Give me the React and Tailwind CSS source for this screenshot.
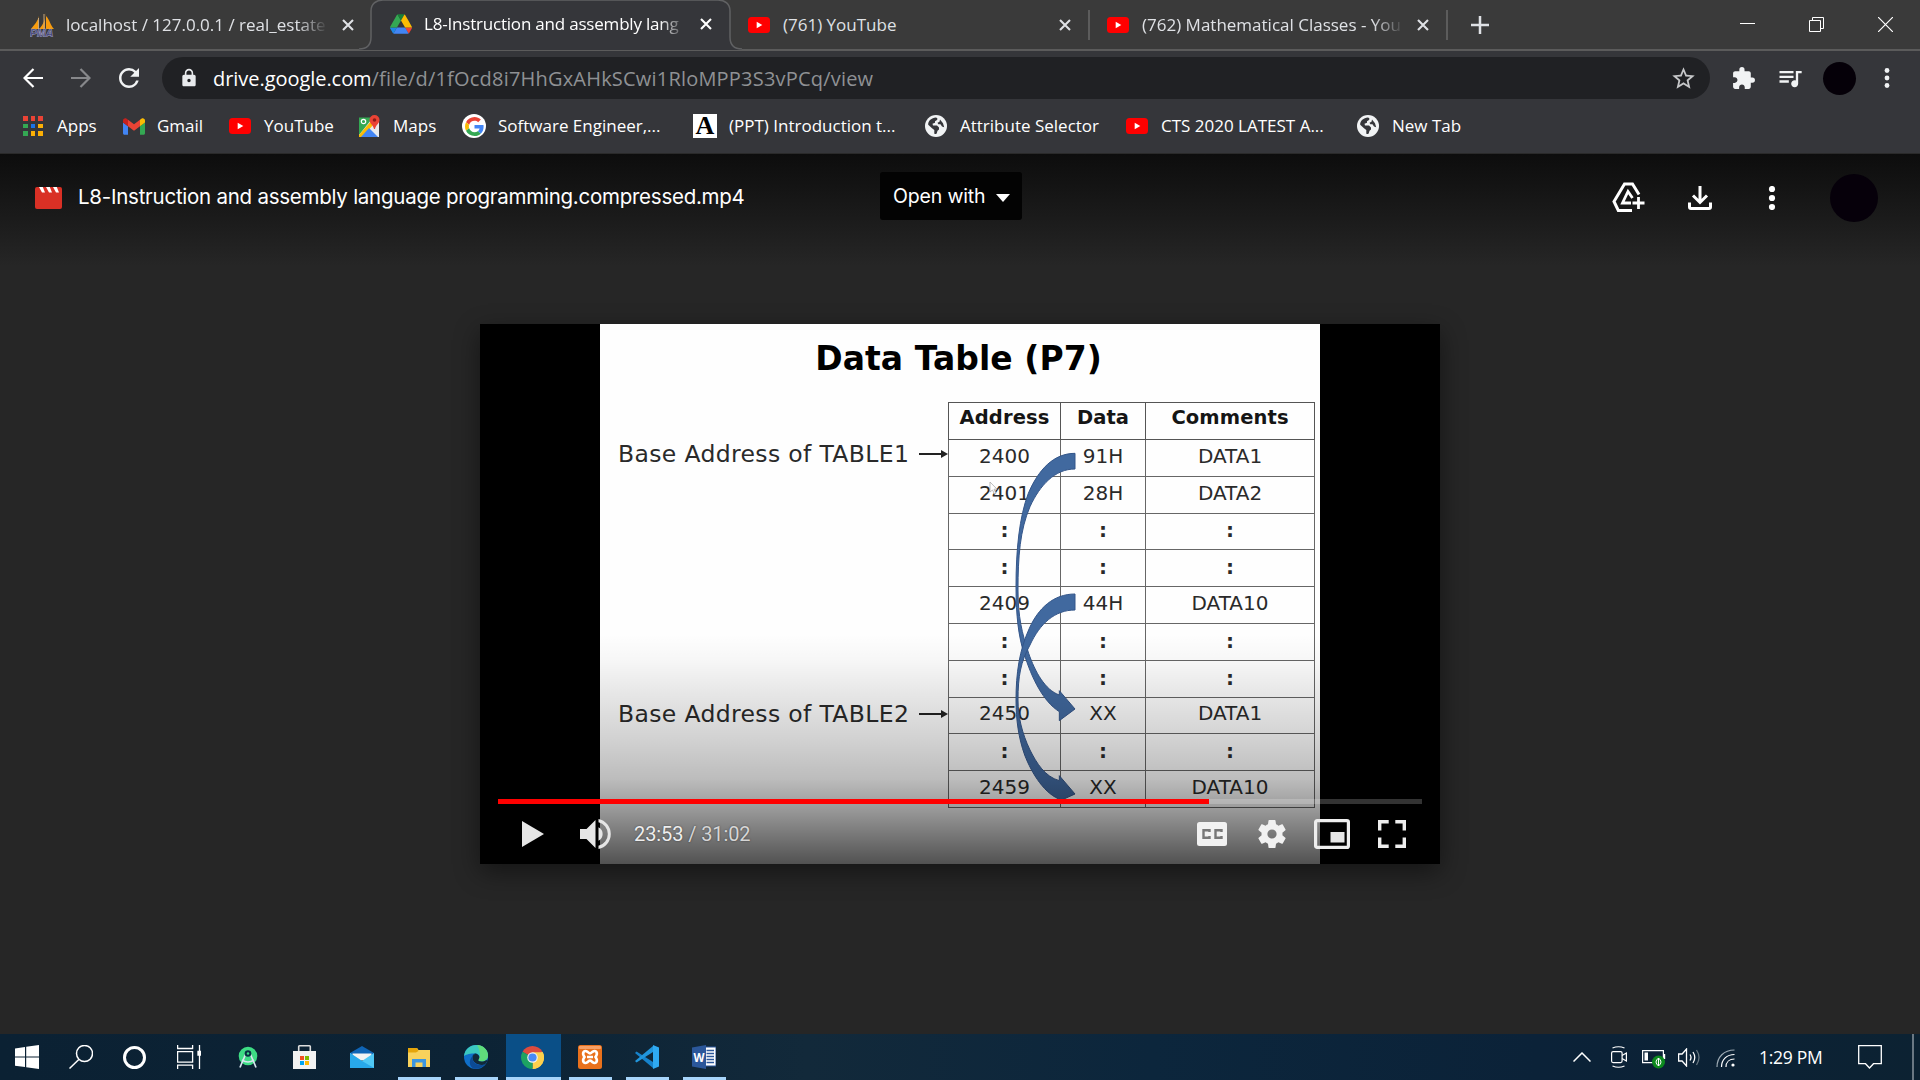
import React from "react";
import { MdStarBorder, MdExtension, MdQueueMusic, MdLock, MdRefresh } from "react-icons/md";

const ui = "font-['Open_Sans','Noto_Sans',sans-serif]";

function YouTube() {
  return (
    <svg viewBox="0 0 22 16" className="h-4 w-[22px] shrink-0">
      <rect width="22" height="16" rx="3.5" fill="#f00" />
      <path d="M8.7 4.8 14.3 8l-5.6 3.2z" fill="#fff" />
    </svg>
  );
}

function DriveLogo() {
  return (
    <svg viewBox="0 0 87.3 78" className="h-5 w-[22px] shrink-0">
      <path d="m6.6 66.85 3.85 6.65c.8 1.4 1.95 2.5 3.3 3.3l13.75-23.8h-27.5c0 1.55.4 3.1 1.2 4.5z" fill="#1e88e5" />
      <path d="m43.65 25-13.75-23.8c-1.35.8-2.5 1.9-3.3 3.3l-25.4 44a9.06 9.06 0 0 0 -1.2 4.5h27.5z" fill="#34a853" />
      <path d="m73.55 76.8c1.35-.8 2.5-1.9 3.3-3.3l1.6-2.75 7.65-13.25c.8-1.4 1.2-2.95 1.2-4.5h-27.5l5.85 11.5z" fill="#ea4335" />
      <path d="m43.65 25 13.75-23.8c-1.35-.8-2.9-1.2-4.5-1.2h-18.5c-1.6 0-3.15.45-4.5 1.2z" fill="#188038" />
      <path d="m59.8 53h-32.3l-13.75 23.8c1.35.8 2.9 1.2 4.5 1.2h50.8c1.6 0 3.15-.45 4.5-1.2z" fill="#4285f4" />
      <path d="m73.4 26.5-12.7-22c-.8-1.4-1.95-2.5-3.3-3.3l-13.75 23.8 16.15 28h27.45c0-1.55-.4-3.1-1.2-4.5z" fill="#fbbc04" />
    </svg>
  );
}

function PmaLogo() {
  return (
    <svg viewBox="0 0 24 24" className="h-6 w-6 shrink-0">
      <path d="M9 3C8 8 4 12 1 16h7zM15 0c1 6-2 12-6 16h6zM16 3c4 4 4 9 8 13h-8z" fill="#f89c0e" />
      <path d="M14 1v15M8.500 5v11" stroke="#c9a77a" strokeWidth="1" />
      <text x="0" y="23.500" fontSize="10" fontWeight="700" fontStyle="italic" fill="#33356e" stroke="#a9a9c9" strokeWidth=".5" textLength="23.500" lengthAdjust="spacingAndGlyphs" className="font-['Liberation_Sans',sans-serif]">PMA</text>
    </svg>
  );
}

function Globe() {
  return (
    <svg viewBox="0 0 22 22" className="size-[22px] shrink-0">
      <circle cx="11" cy="11" r="11" fill="#f1f3f4" />
      <path d="M11 2.5c1.5.5 1.8 1.3 1 2.4L10 6.2v1.6L7.5 8.8 8 10.5h4l2 2v2l-1.5 1.3-.8 2.7c-1 .8-2 .7-2.4 0V15L7 13.3 3.2 9.7C3 6 6.500 2.800 11 2.500zM15 4.500l3 3.700 1.200 4-2.200-.7-1.500-2.200h-2.200l-.8-1.500 2-1z" fill="#35363a" />
    </svg>
  );
}

function GoogleG() {
  return (
    <span className="flex size-6 shrink-0 items-center justify-center rounded-full bg-white">
      <svg viewBox="0 0 48 48" className="size-[19px]">
        <path fill="#EA4335" d="M24 9.5c3.54 0 6.71 1.22 9.21 3.6l6.85-6.85C35.9 2.38 30.47 0 24 0 14.62 0 6.51 5.38 2.56 13.22l7.98 6.19C12.43 13.72 17.74 9.5 24 9.5z" />
        <path fill="#4285F4" d="M46.98 24.55c0-1.57-.15-3.09-.38-4.55H24v9.02h12.94c-.58 2.96-2.26 5.48-4.78 7.18l7.73 6c4.51-4.18 7.09-10.36 7.09-17.65z" />
        <path fill="#FBBC05" d="M10.53 28.59c-.48-1.45-.76-2.99-.76-4.59s.27-3.14.76-4.59l-7.98-6.19C.92 16.46 0 20.12 0 24c0 3.88.92 7.54 2.56 10.78l7.97-6.19z" />
        <path fill="#34A853" d="M24 48c6.48 0 11.93-2.13 15.89-5.81l-7.73-6c-2.15 1.45-4.92 2.3-8.16 2.3-6.26 0-11.57-4.22-13.47-9.91l-7.98 6.19C6.51 42.62 14.62 48 24 48z" />
      </svg>
    </span>
  );
}

function Gmail() {
  return (
    <svg viewBox="52 42 88 66" className="h-[17px] w-[22px] shrink-0">
      <path fill="#4285f4" d="M58 108h14V74L52 59v43c0 3.320 2.690 6 6 6" />
      <path fill="#34a853" d="M120 108h14c3.320 0 6-2.690 6-6V59l-20 15" />
      <path fill="#fbbc04" d="M120 48v26l20-15v-8c0-7.420-8.470-11.650-14.400-7.200" />
      <path fill="#ea4335" d="M72 74V48l24 18 24-18v26L96 92" />
      <path fill="#c5221f" d="M52 51v8l20 15V48l-5.600-4.200c-5.940-4.450-14.400-.220-14.400 7.200" />
    </svg>
  );
}

function Maps() {
  return (
    <svg viewBox="0 0 22 22" className="size-[22px] shrink-0">
      <path d="M1 3h20v19H1z" fill="#e8eaed" />
      <path d="M1 2.500h14L1 20z" fill="#34a853" />
      <path d="M1 20 14 5l3 3L4 22H1z" fill="#fbbc04" />
      <path d="M11 13l9 9H3z" fill="#4285f4" />
      <circle cx="5.500" cy="6.500" r="2.200" fill="none" stroke="#fff" strokeWidth="1.200" />
      <path d="M16.500 0a5 5 0 0 1 5 5c0 3.500-3.500 4.500-4.500 9h-1c-1-4.500-4.500-5.500-4.500-9a5 5 0 0 1 5-5z" fill="#ea4335" />
      <circle cx="16.500" cy="5" r="1.800" fill="#8c1d18" />
    </svg>
  );
}

function AppsGrid() {
  return (
    <span className="grid size-5 shrink-0 grid-cols-3 gap-[3px]">
      {["bg-[#ea4335]", "bg-[#ea4335]", "bg-[#ea4335]", "bg-[#34a853]", "bg-[#1a73e8]", "bg-[#fbaf05]", "bg-[#34a853]", "bg-[#fbaf05]", "bg-[#fbaf05]"].map((c, i) => (
        <span key={i} className={c} />
      ))}
    </span>
  );
}

function Cross({ className }) {
  return (
    <svg viewBox="0 0 12 12" className={`size-3 shrink-0 ${className}`}>
      <path d="M1 1l10 10M11 1 1 11" stroke="currentColor" strokeWidth="2.100" />
    </svg>
  );
}

function TabBar() {
  return (
    <div className="relative flex h-[51px] items-center border-b-2 border-[#5b5b5b] bg-[#3a3a3a] text-[17px] text-[#dfe1e5]">
      <div className="flex h-[50px] w-[371px] shrink-0 items-center pl-[30px]">
        <PmaLogo />
        <span className="ml-3 w-[262px] overflow-hidden whitespace-nowrap [mask-image:linear-gradient(to_right,#000_88%,transparent)]">localhost / 127.0.0.1 / real_estate</span>
        <Cross className="ml-3.5" />
      </div>
      <div className="relative h-[51px] w-[359px] shrink-0">
        <svg viewBox="0 0 384 51" className="absolute -left-3 top-0 h-[51px] w-96">
          <path d="M0 50c8 0 12-4 12-12V12C12 5 17 1 24 1h335c7 0 12 4 12 11v26c0 8 4 12 12 12v2H0z" fill="#35363a" />
          <path d="M0 50c8 0 12-4 12-12V12C12 5 17 1 24 1h335c7 0 12 4 12 11v26c0 8 4 12 12 12" fill="none" stroke="#606163" strokeWidth="1.500" />
        </svg>
        <div className="relative flex h-[50px] items-center pl-[19px] text-white">
          <DriveLogo />
          <span className="ml-3 w-[262px] overflow-hidden whitespace-nowrap tracking-[-0.2px] [mask-image:linear-gradient(to_right,#000_90%,transparent)]">L8-Instruction and assembly lang</span>
          <Cross className="ml-3.5" />
        </div>
      </div>
      <div className="flex h-[50px] w-[358px] shrink-0 items-center pl-[18px]">
        <YouTube />
        <span className="ml-[13px] w-[262px] whitespace-nowrap">(761) YouTube</span>
        <Cross className="ml-[14px]" />
      </div>
      <div className="flex h-[50px] w-[358px] shrink-0 items-center">
        <span className="h-[30px] w-[2px] bg-[#5c5c5c]" />
        <span className="w-[17px]" />
        <YouTube />
        <span className="ml-[13px] w-[262px] overflow-hidden whitespace-nowrap [mask-image:linear-gradient(to_right,#000_88%,transparent)]">(762) Mathematical Classes - You</span>
        <Cross className="ml-[13px]" />
      </div>
      <span className="h-[30px] w-[2px] bg-[#5c5c5c]" />
      <svg viewBox="0 0 18 18" className="ml-[23px] size-[18px]">
        <path d="M9 0v18M0 9h18" stroke="#dfe1e5" strokeWidth="2.500" />
      </svg>
      <div className="ml-auto flex h-[42px] items-center gap-[53px] pr-[27px] text-white">
        <svg viewBox="0 0 15 15" className="mr-px size-[15px]"><path d="M0 6.500h15" stroke="currentColor" /></svg>
        <svg viewBox="0 0 15 15" className="mr-px size-[15px]" fill="none" stroke="currentColor"><path d="M.5 3.500h11v11H.5zM3.500 3.500v-3h11v11h-3" /></svg>
        <svg viewBox="0 0 15 15" className="size-[15px]"><path d="M0 0l15 15M15 0 0 15" stroke="currentColor" strokeWidth="1.200" /></svg>
      </div>
    </div>
  );
}

function AddressBar() {
  return (
    <div className="flex h-[54px] items-center pl-[23px]">
      <svg viewBox="0 0 20 20" className="size-5" fill="none" stroke="#fff" strokeWidth="2.200"><path d="M20 10H2M10.500 1 1.500 10l9 9" /></svg>
      <svg viewBox="0 0 20 20" className="ml-7 size-5" fill="none" stroke="#87888b" strokeWidth="2.200"><path d="M0 10h18M9.500 1l9 9-9 9" /></svg>
      <MdRefresh className="ml-[23px] size-[30px] text-[#f1f3f4]" />
      <div className="ml-[18px] flex h-[42px] w-[1548px] items-center rounded-full bg-[#202124] pl-[17px] pr-[13px]">
        <MdLock className="size-5 text-[#e8eaed]" />
        <span className="ml-[14px] mt-0.5 whitespace-nowrap text-[20px] text-[#8f9194]">
          <span className="tracking-[-0.05px] text-white">drive.google.com</span>
          <span className="tracking-[0.2px]">/file/d/1fOcd8i7HhGxAHkSCwi1RloMPP3S3vPCq/view</span>
        </span>
        <MdStarBorder className="ml-auto size-[27px] text-[#c6c7c9]" />
      </div>
      <MdExtension className="ml-[21px] size-[25px] text-[#f1f3f4]" />
      <MdQueueMusic className="ml-5 size-7 text-[#f1f3f4]" />
      <span className="ml-[19px] size-[33px] rounded-full bg-[#050008]" />
      <svg viewBox="0 0 6 22" className="ml-7 h-[22px] w-1.5" fill="#f1f3f4">
        <circle cx="3" cy="3.500" r="2.400" /><circle cx="3" cy="11" r="2.400" /><circle cx="3" cy="18.500" r="2.400" />
      </svg>
    </div>
  );
}

const bookmarks = [
  { icon: <AppsGrid />, box: "w-[100px] gap-3.5", label: "Apps" },
  { icon: <Gmail />, box: "w-[106px] gap-3", label: "Gmail" },
  { icon: <YouTube />, box: "w-[129px] gap-[13px]", label: "YouTube" },
  { icon: <Maps />, box: "w-[104px] gap-[13px]", label: "Maps" },
  { icon: <GoogleG />, box: "w-[231px] gap-3", label: "Software Engineer,..." },
  {
    icon: <span className="flex size-6 shrink-0 items-center justify-center bg-white font-['Liberation_Serif',serif] text-[26px] leading-6 font-bold text-black">A</span>,
    box: "w-[232px] gap-3", label: "(PPT) Introduction t...",
  },
  { icon: <Globe />, box: "w-[201px] gap-[13px]", label: "Attribute Selector" },
  { icon: <YouTube />, box: "w-[231px] gap-[13px]", label: "CTS 2020 LATEST A..." },
  { icon: <Globe />, box: "w-[120px] gap-[13px]", label: "New Tab" },
];

function Bookmarks() {
  return (
    <div className="flex h-[48px] items-center pb-[6px] pl-[23px] text-[17px] text-white">
      {bookmarks.map((b) => (
        <div key={b.label} className={`flex h-10 shrink-0 items-center whitespace-nowrap ${b.box}`}>
          {b.icon}
          <span>{b.label}</span>
        </div>
      ))}
    </div>
  );
}

function DriveHeader() {
  return (
    <div className="flex h-[112px] items-start bg-linear-to-b from-[#0d0d0d] to-[#262626] font-['Inter',sans-serif] text-white">
      <div className="flex h-[87px] w-[880px] items-center pl-[35px]">
        <svg viewBox="0 0 27 22" className="h-[22px] w-[27px]">
          <rect width="27" height="22" rx="2" fill="#d93025" />
          <path d="M4 0h3.800l2.200 5.500H7zM11 0h3.800L17 5.500h-3zM18 0h3.800L24 5.500h-3z" fill="#fff" />
        </svg>
        <span className="ml-4 whitespace-nowrap text-[20.5px] tracking-[-0.25px]">L8-Instruction and assembly language programming.compressed.mp4</span>
      </div>
      <button className="mt-[18px] flex h-12 w-[142px] items-center rounded-[3px] bg-[#030303] pl-[13px] text-[19.500px] tracking-[-0.15px]">
        <span className="mt-0.5 w-[103px] text-left whitespace-nowrap">Open with</span>
        <svg viewBox="0 0 14 8" className="mt-1 h-2 w-3.5"><path d="M0 0h14L7 8z" fill="#fff" /></svg>
      </button>
      <div className="ml-auto flex h-[87px] items-center pr-[42px]">
        <svg viewBox="0 0 34 31" className="h-[31px] w-[34px]" fill="none" stroke="#fff" strokeWidth="3">
          <path d="M27 12.500 20.500 2H12.500L2 19.500 6.300 28.500H20" />
          <path d="M20.500 16 16 9.500 10.500 21H19" strokeWidth="2.800" />
          <path d="M26.500 15v12M20.500 21h12" strokeWidth="2.800" />
        </svg>
        <svg viewBox="0 0 24 24" className="ml-[42px] size-6" fill="none" stroke="#fff" strokeWidth="3">
          <path d="M12 0v15M5 9.500l7 7 7-7M1.500 16.500v4.500c0 1 .500 1.500 1.500 1.500h18c1 0 1.500-.5 1.500-1.500v-4.500" />
        </svg>
        <svg viewBox="0 0 8 24" className="ml-14 h-6 w-2" fill="#fff">
          <circle cx="4" cy="3" r="3.100" /><circle cx="4" cy="12" r="3.100" /><circle cx="4" cy="21" r="3.100" />
        </svg>
        <span className="ml-[54px] size-12 rounded-full bg-[#06000a]" />
      </div>
    </div>
  );
}

const rows = [
  ["2400", "91H", "DATA1"],
  ["2401", "28H", "DATA2"],
  [":", ":", ":"],
  [":", ":", ":"],
  ["2409", "44H", "DATA10"],
  [":", ":", ":"],
  [":", ":", ":"],
  ["2450", "XX", "DATA1"],
  [":", ":", ":"],
  ["2459", "XX", "DATA10"],
];

function BaseLabel({ text, className }) {
  return (
    <div className={`flex h-8 items-center ${className}`}>
      <span className="mt-0.5 w-[301px] whitespace-nowrap text-[23.500px] tracking-[0.35px]">{text}</span>
      <svg viewBox="0 0 29 8" className="h-2 w-[29px]"><path d="M0 4h24" stroke="#222" strokeWidth="2" /><path d="M22 0l7 4-7 4z" fill="#222" /></svg>
    </div>
  );
}

function Slide() {
  return (
    <div className="h-full w-[720px] overflow-hidden bg-[#fefefe] font-['DejaVu_Sans',sans-serif] text-[#2a2a2a]">
      <h1 className="mt-[17px] h-9 pr-[3px] text-center text-[33px] leading-9 font-bold tracking-[0.05px] text-black">Data Table (P7)</h1>
      <div className="mt-[25px] flex">
        <div className="w-[348px] shrink-0 pl-[18px]">
          <BaseLabel text="Base Address of TABLE1" className="mt-9" />
          <BaseLabel text="Base Address of TABLE2" className="mt-[228px]" />
        </div>
        <div className="relative">
          <table className="w-[367px] table-fixed border-collapse text-center text-[20px] leading-6">
            <colgroup><col className="w-[112px]" /><col className="w-[85px]" /><col className="w-[169px]" /></colgroup>
            <thead>
              <tr className="h-[37px] text-[19.500px] text-[#151515]">
                {["Address", "Data", "Comments"].map((h) => (
                  <th key={h} className="border-[1.500px] border-[#555] p-0 pb-1.5 tracking-[0.1px]">{h}</th>
                ))}
              </tr>
            </thead>
            <tbody>
              {rows.map((r, i) => (
                <tr key={i} className="h-[36.800px]">
                  {r.map((c, j) => (
                    <td key={j} className={c === ":" ? "border-[1.500px] border-[#666] p-0 pb-0.5 font-bold" : "border-[1.500px] border-[#666] p-0 pb-1"}>{c}</td>
                  ))}
                </tr>
              ))}
            </tbody>
          </table>
          <svg viewBox="0 0 1200 1290" className="absolute -left-[18px] -top-[12px] h-[430px] w-[400px]" fill="#41699f" stroke="#34568a" strokeWidth="3">
            <path d="M435 190C370 190 325 240 295 310C268 380 258 480 258 590C258 680 266 740 282 790C305 865 340 935 388 965V992L435 957L388 902V915C345 900 315 845 296 790C276 730 264 680 264 600C264 500 270 420 300 350C330 285 375 237 435 237Z" />
            <path d="M435 612C370 612 325 655 298 715C268 780 258 850 258 930C258 990 266 1045 284 1095C305 1150 345 1215 395 1230L435 1212L388 1157V1172C345 1160 320 1120 300 1080C276 1030 264 980 264 930C264 860 272 815 300 765C330 700 375 660 435 660Z" />
          </svg>
          <svg viewBox="0 0 10 14" className="absolute left-[41px] top-[79px] h-3.5 w-2.5" fill="#fff" stroke="#aaa" strokeWidth=".8">
            <path d="M1 1v10l2.500-2 2 4 1.500-.8-2-4H8z" />
          </svg>
        </div>
      </div>
    </div>
  );
}

function Controls() {
  return (
    <div className="absolute inset-x-0 bottom-0 h-[230px] bg-[linear-gradient(to_bottom,transparent_0%,rgba(0,0,0,.03)_12%,rgba(0,0,0,.1)_28%,rgba(0,0,0,.18)_47%,rgba(0,0,0,.26)_63%,rgba(0,0,0,.36)_73%,rgba(0,0,0,.5)_85%,rgba(0,0,0,.68)_100%)] px-[18px] pt-[165px]">
      <div className="flex h-[5px] bg-white/20"><span className="w-[711px] bg-[#f00]" /></div>
      <div className="mt-[14px] flex h-[32px] items-center pl-6 pr-4 text-[#eee]">
        <svg viewBox="0 0 22 26" className="h-[26px] w-[22px]"><path d="M0 0l22 13L0 26z" fill="#e6e6e6" /></svg>
        <svg viewBox="0 0 31 30" className="ml-9 h-[30px] w-[31px]" fill="#e6e6e6">
          <path d="M0 10h6.500L15.500 1v28L6.500 20H0zM18.500 8.300a7.500 7.500 0 0 1 0 13.400zM18.500 0a15.300 15.300 0 0 1 0 30v-3.300a12 12 0 0 0 0-23.400z" />
        </svg>
        <span className="ml-[23px] font-['Roboto',sans-serif] text-[20px] tracking-[-0.1px] whitespace-pre [text-shadow:0_0_2px_rgba(0,0,0,.5)]">23:53<span className="text-[#d6d6d6]"> / 31:02</span></span>
        <svg viewBox="0 0 30 24" className="ml-auto h-6 w-[30px]">
          <rect width="30" height="24" rx="2.500" fill="#f1f1f1" />
          <path d="M12.500 10V8.200H6.500v7.600h6V14M24.500 10V8.200h-6v7.600h6V14" fill="none" stroke="#777" strokeWidth="2.400" />
        </svg>
        <svg viewBox="2 2 20 20" className="ml-[31px] size-7" fill="#f1f1f1">
          <path d="M19.430 12.980c.04-.32.070-.64.070-.98s-.03-.66-.07-.98l2.110-1.650c.19-.15.240-.42.120-.64l-2-3.460c-.12-.22-.39-.3-.61-.22l-2.490 1c-.52-.4-1.080-.73-1.690-.98l-.38-2.650C14.460 2.180 14.250 2 14 2h-4c-.25 0-.46.180-.49.420l-.38 2.650c-.61.250-1.170.590-1.690.980l-2.490-1c-.23-.09-.49 0-.61.220l-2 3.460c-.13.220-.07.490.12.640l2.110 1.650c-.04.320-.07.650-.07.980s.03.660.070.980l-2.110 1.650c-.19.150-.24.420-.12.640l2 3.460c.12.220.390.300.610.220l2.490-1c.52.400 1.080.730 1.690.980l.380 2.650c.03.240.240.420.490.420h4c.25 0 .46-.18.490-.42l.38-2.650c.61-.25 1.170-.59 1.690-.98l2.490 1c.23.090.49 0 .610-.22l2-3.460c.12-.22.070-.49-.12-.64l-2.110-1.650zM12 15.300a3.300 3.300 0 1 1 0-6.600 3.300 3.300 0 0 1 0 6.600z" />
        </svg>
        <svg viewBox="0 0 36 30" className="ml-7 h-[30px] w-9">
          <rect x="1.600" y="1.600" width="32.800" height="26.800" rx="1.500" fill="none" stroke="#eee" strokeWidth="3.200" />
          <path d="M16.500 13h14v10.500h-14z" fill="#e6e6e6" />
        </svg>
        <svg viewBox="0 0 28 28" className="ml-7 size-7" fill="none" stroke="#eee" strokeWidth="3.400"><path d="M1.700 10.500V1.700h9M17.300 1.700h9v8.800M26.300 17.500v8.800h-9M10.700 26.300h-9v-8.800" /></svg>
      </div>
    </div>
  );
}

const task = "flex h-[46px] shrink-0 items-center justify-center border-b-[3px] pt-[3px]";

function Taskbar() {
  return (
    <div className="flex h-[46px] items-center bg-[linear-gradient(to_right,#0b2133_0%,#0c2335_25%,#12293a_42%,#0c263c_60%,#0b2238_80%,#0c2232_100%)] text-white">
      <svg viewBox="0 0 24 24" className="ml-[15px] size-6" fill="#fff"><path d="M0 3.500 10 2v9.500H0zM11.200 1.800 24 0v11.500H11.200zM0 12.500h10V22L0 20.700zM11.200 12.500H24V24l-12.800-1.800z" /></svg>
      <svg viewBox="0 0 24 24" className="ml-[30px] size-6" fill="none" stroke="#fff" strokeWidth="1.500"><circle cx="15.500" cy="8.500" r="8" /><path d="M9.800 14.500.5 23.500" /></svg>
      <span className="ml-[30px] size-[23px] rounded-full border-[3px] border-white" />
      <svg viewBox="0 0 24 24" className="ml-[31px] size-6" fill="none" stroke="#fff" strokeWidth="1.300"><path d="M.6 0v3.500h15V0M.6 6.600h15v10.500H.6zM.6 24v-3.800h15V24M22.500 0v24" /><path d="M21 6.500h3v3.500h-3z" fill="#fff" /></svg>
      <svg viewBox="0 0 20 22" className="ml-[37px] h-[22px] w-5">
        <circle cx="10" cy="10" r="9.300" fill="#3ddc84" /><path d="M9 5 3 19l-1 2.500M11 5l6 14 1 2.500M4 14q6 4 12 0" fill="none" stroke="#d7e4ee" strokeWidth="1.700" /><circle cx="10" cy="7.500" r="3.300" fill="#073042" /><circle cx="10" cy="7.500" r="1.200" fill="#3ddc84" />
      </svg>
      <svg viewBox="0 0 23 24" className="ml-[35px] h-6 w-[23px]">
        <path d="M5.700 7V1.500Q5.700.800 6.500.800h10q.8 0 .8.700V7" fill="none" stroke="#ddd" strokeWidth="1.600" /><path d="M0 6h23v18H0z" fill="#f2f2f2" />
        <path d="M7 11h4v4H7z" fill="#f25022" /><path d="M12 11h4v4h-4z" fill="#7fba00" /><path d="M7 16h4v4H7z" fill="#00a4ef" /><path d="M12 16h4v4h-4z" fill="#ffb900" />
      </svg>
      <svg viewBox="0 0 24 22" className="ml-[34px] h-[22px] w-6"><path d="M0 7 12 0l12 7v4H0z" fill="#0f64b5" /><path d="M2.500 7.500h19v7h-19z" fill="#f3f3f3" /><path d="M0 7l12 8 12-8v15H0z" fill="#50c8f5" /><path d="M0 7l12 8 12 7H0z" fill="#28a8ea" /></svg>

      <div className="ml-6 flex gap-3.5">
        <div className={`${task} w-[43px] border-[#a7d5fb]`}>
          <svg viewBox="0 0 22 19" className="mr-px h-[19px] w-[22px]"><path d="M0 0h9l1.500 2H22v17H0z" fill="#f8d25c" /><path d="M0 0h9l1.500 3L8 4.500H0z" fill="#e5a50a" /><path d="M4 19v-8h14v8h-3.500v-4.500h-7V19z" fill="#3b96e0" /></svg>
        </div>
        <div className={`${task} w-[43px] border-[#a7d5fb]`}>
          <svg viewBox="0 0 24 24" className="mr-0.5 size-6">
            <circle cx="12" cy="12" r="12" fill="#0f6fc9" />
            <path d="M0 11C1 4 6 0 12 0c7 0 12 5 12 10.500 0 4-3.500 6-6.500 6-3 0-3.500-1-3-2 1.500-1.500 1.500-5.500-3-6C6 8 1 10 0 11z" fill="#3bc8c0" />
            <path d="M13 0c7 .5 11 5 11 10.500 0 4-3.500 6-6.500 6-3 0-3.500-1-3-2 3-4 1-10-1.500-14.500z" fill="#5fdc7b" />
            <path d="M14.500 14.500c-.5 1 0 2 3 2 2.500 0 4-.7 5-1.500l1 1-2.500 3.500C15 21 8 18 8.500 12c0-2 1.500-3.500 3.200-3.500 4 1 4.300 4.500 2.800 6z" fill="#12293a" />
            <path d="M8.500 12C8 18 14 21.500 21 19.500 17 23.500 13 24.500 9.500 23.500 4 20.500 4.500 13 11.700 8.500 10 9 8.500 10 8.500 12z" fill="#0c4a94" />
          </svg>
        </div>
      </div>
      <div className={`${task} ml-2 w-[55px] border-[#a7d5fb] bg-[#0a4f87]`}>
        <svg viewBox="0 0 24 24" className="mr-0.5 size-[23px]">
          <path d="M12 12 1.610 6A12 12 0 0 1 22.390 6z" fill="#dd4b3e" /><path d="M12 12 22.390 6A12 12 0 0 1 12 24z" fill="#fdd04c" /><path d="M12 12v12A12 12 0 0 1 1.610 6z" fill="#1da362" /><path d="M12 6.500h10.700A12 12 0 0 1 12 24l5-9z" fill="#fdd04c" />
          <circle cx="12" cy="12" r="5.500" fill="#f1f1f1" /><circle cx="12" cy="12" r="4.300" fill="#4a8af4" />
        </svg>
      </div>
      <div className="ml-2 flex gap-3.5">
        <div className={`${task} w-[43px] border-[#a7d5fb]`}>
          <svg viewBox="0 0 24 24" className="mr-px size-6"><rect width="24" height="24" rx="2.500" fill="#e9711c" /><rect x="1" y="1" width="22" height="3" rx="1" fill="#f6a066" /><path d="M9.500 6.800C6 4.500 3.500 8 6.500 12 3.500 16 6 19.500 9.500 17.200Q12 14 14.500 17.200C18 19.500 20.500 16 17.500 12 20.500 8 18 4.500 14.500 6.800Q12 10 9.500 6.800zM9 12h6" fill="none" stroke="#fff" strokeWidth="2.600" /></svg>
        </div>
        <div className={`${task} w-[43px] border-[#a7d5fb]`}>
          <svg viewBox="0 0 24 24" className="mr-0.5 size-6"><path d="M1.500 6.500 0 8l18 15V17z" fill="#1683cc" /><path d="M1.500 17.500 0 16 18 1v6z" fill="#2196dd" /><path d="M18 0l6 2.500v19L18 24z" fill="#2faaf2" /></svg>
        </div>
        <div className={`${task} w-[43px] border-[#a7d5fb]`}>
          <svg viewBox="0 0 24 24" className="mr-0.5 size-6"><path d="M12 2h12v19H12z" fill="#fff" stroke="#2b579a" /><path d="M14.500 5.500H22M14.500 8.500H22M14.500 11.500H22M14.500 14.500H22M14.500 17.500H22" stroke="#2b579a" strokeWidth="1.300" /><path d="M0 2.500 14 0v24L0 21.500z" fill="#2b579a" /><text x="1.500" y="16.500" fontSize="12" fontWeight="700" fill="#fff" textLength="11" lengthAdjust="spacingAndGlyphs" className="font-['Open_Sans',sans-serif]">W</text></svg>
        </div>
      </div>

      <div className="ml-auto flex items-center">
        <svg viewBox="0 0 18 10" className="h-2.5 w-[18px]" fill="none" stroke="#fff" strokeWidth="1.500"><path d="M.5 9.500 9 1l8.500 8.500" /></svg>
        <svg viewBox="0 0 16 22" className="ml-5 h-[22px] w-4" fill="none" stroke="#fff" strokeWidth="1.200"><rect x=".6" y="5.600" width="10.500" height="11" rx="1.500" /><path d="M11 9.500 15.400 7v8L11 12.500M1.500 2q6-2.500 12 0M1.500 20q6 2.500 12 0" /></svg>
        <svg viewBox="0 0 24 20" className="ml-[15px] mt-1 h-5 w-6" fill="none" stroke="#fff" strokeWidth="1.200"><path d="M.6 1.600h20.800v12H.6zM22.600 5v5" /><path d="M2.500 3.500h3.500v8H2.500z" fill="#fff" stroke="none" /><circle cx="16.500" cy="13" r="6.500" fill="#0c8a1e" stroke="none" /><path d="M16.500 9q5 4 0 8-5-4 0-8v8" strokeWidth="1" /></svg>
        <svg viewBox="0 0 22 19" className="ml-3 h-[19px] w-[22px]" fill="none" stroke="#fff" strokeWidth="1.300"><path d="M.6 6h3.500L8.500 1v17l-4.400-5H.6zM12 6.500q2 3 0 6M15 4q3.500 5.500 0 11" /><path d="M18.500 2q5 7.500 0 15" stroke="#66757f" /></svg>
        <svg viewBox="0 0 19 18" className="ml-4 mt-0.5 h-[18px] w-[19px]" fill="none" stroke="#fff" strokeWidth="1.200"><path d="M1 18C1 8 8 1 18.500 1" stroke="#9eabb4" /><path d="M5.500 18C5.500 10.500 11 5.500 18.500 5.500M10 18c0-5 3.500-8 8.500-8" /><circle cx="17" cy="16" r="1.600" fill="#fff" stroke="none" /></svg>
        <span className="ml-6 w-[64px] whitespace-nowrap text-[17.500px] tracking-[-0.3px]">1:29 PM</span>
        <svg viewBox="0 0 24 24" className="ml-[35px] size-6" fill="none" stroke="#fff" strokeWidth="1.300"><path d="M.7.700h22.600v18H15.500L11.500 23l-4-4.300H.7z" /></svg>
        <span className="ml-[30px] mr-1.5 h-[46px] w-[2px] bg-[#6a7883]" />
      </div>
    </div>
  );
}

export default function App() {
  return (
    <div className={`flex h-[1080px] w-[1920px] flex-col overflow-hidden bg-[#262626] ${ui}`}>
      <div className="h-[154px] shrink-0 border-b border-[#2a2a2a] bg-[#35363a]">
        <TabBar />
        <AddressBar />
        <Bookmarks />
      </div>
      <main className="h-[880px] shrink-0">
        <DriveHeader />
        <div className="relative mx-auto mt-[58px] flex h-[540px] w-[960px] justify-center bg-black shadow-[0_8px_24px_rgba(0,0,0,0.45)]">
          <Slide />
          <Controls />
        </div>
      </main>
      <Taskbar />
    </div>
  );
}
